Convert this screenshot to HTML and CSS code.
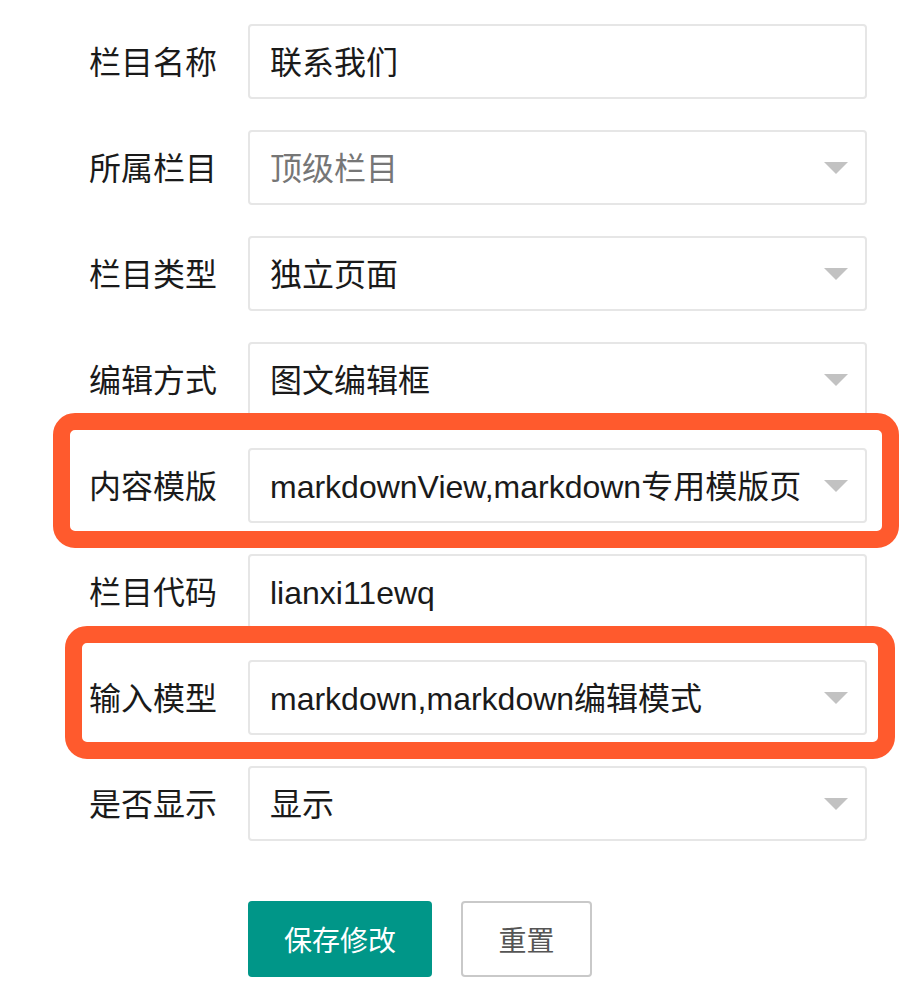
FILE: index.html
```html
<!DOCTYPE html>
<html lang="zh-CN">
<head>
  <meta charset="UTF-8">
  <title>栏目编辑</title>
  <link rel="stylesheet" href="styles.css">
</head>
<body>

  <form class="column-form">
    <div class="form-item">
      <label class="form-label">栏目名称</label>
      <div class="form-input">联系我们</div>
    </div>

    <div class="form-item">
      <label class="form-label">所属栏目</label>
      <div class="form-input select placeholder">顶级栏目</div>
    </div>

    <div class="form-item">
      <label class="form-label">栏目类型</label>
      <div class="form-input select">独立页面</div>
    </div>

    <div class="form-item">
      <label class="form-label">编辑方式</label>
      <div class="form-input select">图文编辑框</div>
    </div>

    <div class="form-item marked mark-one">
      <label class="form-label">内容模版</label>
      <div class="form-input select">markdownView,markdown专用模版页</div>
    </div>

    <div class="form-item">
      <label class="form-label">栏目代码</label>
      <div class="form-input">lianxi11ewq</div>
    </div>

    <div class="form-item marked mark-two">
      <label class="form-label">输入模型</label>
      <div class="form-input select">markdown,markdown编辑模式</div>
    </div>

    <div class="form-item">
      <label class="form-label">是否显示</label>
      <div class="form-input select">显示</div>
    </div>

    <div class="form-actions">
      <button type="button" class="btn btn-primary">保存修改</button>
      <button type="button" class="btn btn-plain">重置</button>
    </div>
  </form>

</body>
</html>
```

FILE: styles.css
```css
body {
  margin: 0;
  padding: 0;
  background: #fff;
  font-family: "Liberation Sans", "Noto Sans CJK SC", sans-serif;
  color: #1a1a1a;
}
.column-form {
  width: 900px;
  padding-top: 24px;
}
.form-item {
  position: relative;
  display: flex;
  align-items: center;
  height: 75px;
  margin-bottom: 31px;
}
.form-label {
  width: 248px;
  box-sizing: border-box;
  padding-right: 31px;
  padding-bottom: 4px;
  text-align: right;
  font-size: 32px;
  color: #1a1a1a;
}
.form-input {
  position: relative;
  width: 619px;
  height: 75px;
  box-sizing: border-box;
  border: 2px solid #e6e6e6;
  border-radius: 4px;
  padding-left: 20px;
  padding-top: 2px;
  font-size: 32px;
  line-height: 71px;
  white-space: nowrap;
  overflow: hidden;
}
.placeholder {
  color: #767676;
}
.select::after {
  content: "";
  position: absolute;
  right: 17px;
  top: 30px;
  border-left: 12px solid transparent;
  border-right: 12px solid transparent;
  border-top: 12px solid #c2c2c2;
}

/* red annotation frames */
.marked::after {
  content: "";
  position: absolute;
  border: 17px solid #ff5a2d;
  border-radius: 22px;
}
.mark-one::after {
  left: 53px;
  right: 1px;
  top: -35px;
  bottom: -25px;
}
.mark-two::after {
  left: 65px;
  right: 5px;
  top: -34px;
  bottom: -24px;
}

.form-actions {
  display: flex;
  gap: 29px;
  padding-left: 248px;
  margin-top: 60px;
}
.btn {
  height: 76px;
  border-radius: 4px;
  font-family: "Liberation Sans", "Noto Sans CJK SC", sans-serif;
  font-size: 28px;
  cursor: pointer;
  padding: 0;
}
.btn-primary {
  width: 184px;
  background: #009688;
  border: none;
  color: #fff;
}
.btn-plain {
  width: 131px;
  background: #fff;
  border: 2px solid #c9c9c9;
  color: #555;
}
```
